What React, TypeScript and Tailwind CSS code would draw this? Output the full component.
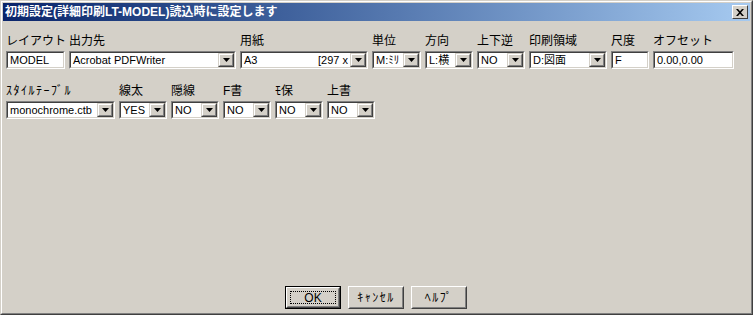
import React from "react";

const FONT = { fontFamily: '"Liberation Sans", "Noto Sans CJK JP", sans-serif' };

function Sunken({ width, children }: { width: number; children: React.ReactNode }) {
  return (
    <div
      className="h-[18px] bg-white border border-t-[#808080] border-l-[#808080] border-b-white border-r-white"
      style={{ width }}
    >
      <div className="h-full w-full border border-t-[#404040] border-l-[#404040] border-b-[#d4d0c8] border-r-[#d4d0c8] flex items-center overflow-hidden">
        {children}
      </div>
    </div>
  );
}

function DropArrow() {
  return (
    <div className="h-full w-[16px] shrink-0 bg-[#d4d0c8] border border-t-[#d4d0c8] border-l-[#d4d0c8] border-b-[#404040] border-r-[#404040]">
      <div className="h-full w-full border border-t-white border-l-white border-b-[#808080] border-r-[#808080] flex items-center justify-center">
        <svg width="7" height="4" viewBox="0 0 7 4">
          <path d="M0 0h7L3.5 4z" fill="#000" />
        </svg>
      </div>
    </div>
  );
}

function Label({ text, kana }: { text: string; kana?: boolean }) {
  return (
    <div
      className={
        "h-[18px] text-[12px] leading-[16px] text-black whitespace-nowrap " +
        (kana ? "tracking-[1.5px]" : "")
      }
    >
      {text}
    </div>
  );
}

function Field({ label, width, value }: { label: string; width: number; value: string }) {
  return (
    <div className="flex flex-col" style={{ width }}>
      <Label text={label} />
      <Sunken width={width}>
        <span className="pl-[2px] text-[11px] leading-[14px] text-black whitespace-nowrap">{value}</span>
      </Sunken>
    </div>
  );
}

function Combo({
  label,
  width,
  value,
  extra,
  kana,
}: {
  label: string;
  width: number;
  value: string;
  extra?: string;
  kana?: boolean;
}) {
  return (
    <div className="flex flex-col" style={{ width }}>
      <Label text={label} kana={kana} />
      <Sunken width={width}>
        <span className="pl-[2px] flex-1 min-w-0 flex text-[11px] leading-[14px] text-black whitespace-nowrap overflow-hidden">
          <span>{value}</span>
          {extra && <span className="ml-auto pr-[2px]">{extra}</span>}
        </span>
        <DropArrow />
      </Sunken>
    </div>
  );
}

function Btn({ label, isDefault }: { label: string; isDefault?: boolean }) {
  return (
    <div className={isDefault ? "border border-black" : ""}>
      <div
        className={
          "bg-[#d4d0c8] border border-t-white border-l-white border-b-[#404040] border-r-[#404040] " +
          (isDefault ? "w-[54px] h-[21px]" : "w-[56px] h-[23px]")
        }
      >
        <div className="h-full w-full border border-t-[#d4d0c8] border-l-[#d4d0c8] border-b-[#808080] border-r-[#808080] flex items-center justify-center p-[2px]">
          <div
            className={
              "h-full w-full flex items-center justify-center text-[12px] leading-[14px] text-black " +
              (isDefault ? "border border-dotted border-black" : "tracking-[1.5px]")
            }
          >
            {label}
          </div>
        </div>
      </div>
    </div>
  );
}

export default function App() {
  return (
    <div
      className="w-[753px] h-[315px] bg-[#d4d0c8] border border-t-[#d4d0c8] border-l-[#d4d0c8] border-b-[#404040] border-r-[#404040]"
      style={FONT}
    >
      <div className="h-full w-full border border-t-white border-l-white border-b-[#808080] border-r-[#808080] p-[1px] flex flex-col">
        {/* Title bar */}
        <div className="h-[18px] shrink-0 bg-gradient-to-r from-[#0a246a] to-[#a6caf0] flex items-center pl-[2px] pr-[2px]">
          <span className="text-white text-[12px] font-bold leading-[16px] whitespace-nowrap">
            初期設定(詳細印刷LT-MODEL)読込時に設定します
          </span>
          <div className="ml-auto w-[16px] h-[14px] bg-[#d4d0c8] border border-t-white border-l-white border-b-[#404040] border-r-[#404040] flex items-center justify-center">
            <svg width="8" height="7" viewBox="0 0 8 7">
              <path d="M0 0h2l2 2.2L6 0h2L5 3.5 8 7H6L4 4.8 2 7H0l3-3.5z" fill="#000" />
            </svg>
          </div>
        </div>

        {/* Content */}
        <div className="flex-1 flex flex-col pl-[3px] pt-[12px]">
          <div className="flex gap-[4px]">
            <Field label="レイアウト" width={59} value="MODEL" />
            <Combo label="出力先" width={167} value="Acrobat PDFWriter" />
            <Combo label="用紙" width={128} value="A3" extra="[297 x" />
            <Combo label="単位" width={49} value="M:ﾐﾘ" />
            <Combo label="方向" width={48} value="L:横" />
            <Combo label="上下逆" width={48} value="NO" />
            <Combo label="印刷領域" width={78} value="D:図面" />
            <Field label="尺度" width={38} value="F" />
            <Field label="オフセット" width={81} value="0.00,0.00" />
          </div>

          <div className="flex gap-[4px] mt-[14px]">
            <Combo label="ｽﾀｲﾙﾃｰﾌﾞﾙ" width={109} value="monochrome.ctb" kana />
            <Combo label="線太" width={48} value="YES" />
            <Combo label="隠線" width={48} value="NO" />
            <Combo label="F書" width={48} value="NO" />
            <Combo label="ﾓ保" width={48} value="NO" />
            <Combo label="上書" width={48} value="NO" />
          </div>

          <div className="flex-1" />

          <div className="flex justify-center items-center gap-[7px] pb-[3px] pr-[4px]">
            <Btn label="OK" isDefault />
            <Btn label="ｷｬﾝｾﾙ" />
            <Btn label="ﾍﾙﾌﾟ" />
          </div>
        </div>
      </div>
    </div>
  );
}
